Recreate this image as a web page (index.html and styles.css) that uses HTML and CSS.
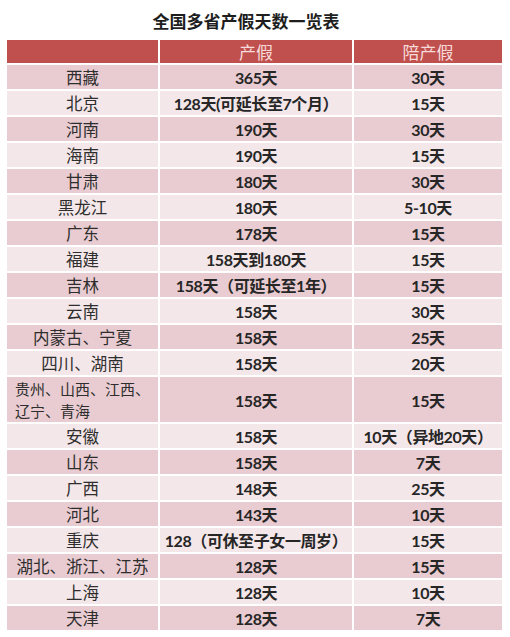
FILE: index.html
```html
<!DOCTYPE html>
<html lang="zh">
<head>
<meta charset="utf-8">
<title>全国多省产假天数一览表</title>
<link rel="stylesheet" href="styles.css">
</head>
<body>
<div class="page">
  <h1 class="title">全国多省产假天数一览表</h1>
  <div class="table">
    <div class="hd"></div><div class="hd">产假</div><div class="hd">陪产假</div>

    <div class="c p dk">西藏</div><div class="c n dk">365天</div><div class="c n dk">30天</div>
    <div class="c p lt">北京</div><div class="c n lt">128天(可延长至7个月）</div><div class="c n lt">15天</div>
    <div class="c p dk">河南</div><div class="c n dk">190天</div><div class="c n dk">30天</div>
    <div class="c p lt">海南</div><div class="c n lt">190天</div><div class="c n lt">15天</div>
    <div class="c p dk">甘肃</div><div class="c n dk">180天</div><div class="c n dk">30天</div>
    <div class="c p lt">黑龙江</div><div class="c n lt">180天</div><div class="c n lt">5-10天</div>
    <div class="c p dk">广东</div><div class="c n dk">178天</div><div class="c n dk">15天</div>
    <div class="c p lt">福建</div><div class="c n lt">158天到180天</div><div class="c n lt">15天</div>
    <div class="c p dk">吉林</div><div class="c n dk">158天（可延长至1年）</div><div class="c n dk">15天</div>
    <div class="c p lt">云南</div><div class="c n lt">158天</div><div class="c n lt">30天</div>
    <div class="c p dk">内蒙古、宁夏</div><div class="c n dk">158天</div><div class="c n dk">25天</div>
    <div class="c p lt">四川、湖南</div><div class="c n lt">158天</div><div class="c n lt">20天</div>
    <div class="c p dk left"><span class="ln">贵州、山西、江西、</span><span class="ln">辽宁、青海</span></div><div class="c n dk">158天</div><div class="c n dk">15天</div>
    <div class="c p lt">安徽</div><div class="c n lt">158天</div><div class="c n lt">10天（异地20天）</div>
    <div class="c p dk">山东</div><div class="c n dk">158天</div><div class="c n dk">7天</div>
    <div class="c p lt">广西</div><div class="c n lt">148天</div><div class="c n lt">25天</div>
    <div class="c p dk">河北</div><div class="c n dk">143天</div><div class="c n dk">10天</div>
    <div class="c p lt">重庆</div><div class="c n lt">128（可休至子女一周岁）</div><div class="c n lt">15天</div>
    <div class="c p dk">湖北、浙江、江苏</div><div class="c n dk">128天</div><div class="c n dk">15天</div>
    <div class="c p lt">上海</div><div class="c n lt">128天</div><div class="c n lt">10天</div>
    <div class="c p dk">天津</div><div class="c n dk">128天</div><div class="c n dk">7天</div>
  </div>
</div>
</body>
</html>
```

FILE: styles.css
```css
html, body {
  margin: 0;
  padding: 0;
  background: #ffffff;
}

.page {
  width: 510px;
  height: 637px;
  font-family: "Noto Sans CJK SC", sans-serif;
  color: #2a2a2a;
}

.title {
  margin: 0;
  height: 40px;
  display: flex;
  align-items: center;
  justify-content: center;
  padding-right: 18px;
  box-sizing: border-box;
  font-size: 17px;
  font-weight: 700;
  color: #1e1e1e;
}

.table {
  margin-left: 7px;
  width: 495px;
  display: grid;
  grid-template-columns: 151px 192px 148px;
  grid-template-rows: 23px repeat(12, 24px) 45px repeat(8, 24px);
  gap: 2px;
}

.hd {
  background: #c0504d;
  color: #f7dada;
  font-size: 17px;
  display: flex;
  align-items: center;
  justify-content: center;
}

.c {
  display: flex;
  align-items: center;
  justify-content: center;
  white-space: nowrap;
}

.dk { background: #e9ccd1; }
.lt { background: #f4e7e9; }

.p {
  font-size: 16.5px;
  font-weight: 400;
  color: #2e2e2e;
}

.n {
  font-family: "Lato", "Noto Sans CJK SC", sans-serif;
  font-size: 16px;
  font-weight: 700;
  color: #262626;
  letter-spacing: -0.4px;
}

.left {
  flex-direction: column;
  align-items: flex-start;
  justify-content: center;
  padding-left: 8px;
  font-size: 15px;
}

.ln {
  display: block;
  line-height: 22px;
}
```
